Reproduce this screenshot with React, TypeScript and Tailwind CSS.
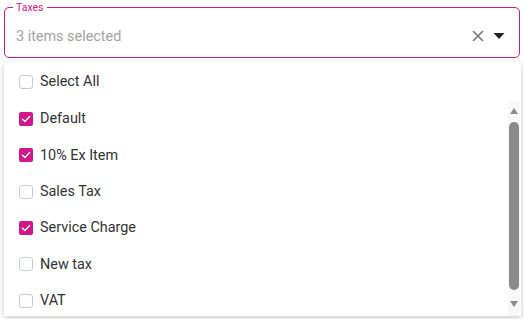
import React from "react";

const options = [
  { label: "Default", checked: true },
  { label: "10% Ex Item", checked: true },
  { label: "Sales Tax", checked: false },
  { label: "Service Charge", checked: true },
  { label: "New tax", checked: false },
  { label: "VAT", checked: false },
];

const Box = ({ checked }: { checked: boolean }) =>
  checked ? (
    <span className="flex h-[14px] w-[14px] items-center justify-center rounded-[2px] bg-[#d3178a]">
      <svg width="10" height="10" viewBox="0 0 10 10" fill="none">
        <path d="M1.5 5.2 L4 7.5 L8.6 2.6" stroke="white" strokeWidth="1.4" strokeLinecap="round" strokeLinejoin="round" />
      </svg>
    </span>
  ) : (
    <span className="h-[14px] w-[14px] rounded-[3px] border border-[#c5cbd3] bg-white" />
  );

const App: React.FC = () => {
  return (
    <div className="h-[319px] w-[524px] bg-white font-['Roboto',sans-serif] text-[14.4px] text-[#333]">
      <div className="px-[4px] pt-[7px]">
        <div className="relative flex h-[51px] items-center rounded-[5px] border border-[#d3178a] pl-[11px] pr-[14px]">
          <span className="absolute -top-[5px] left-[8px] bg-white px-[3px] text-[10.5px] leading-[10px] text-[#d3178a]">
            Taxes
          </span>
          <span className="flex-1 pt-[9px] text-[14.4px] text-[#a3a3a3]">3 items selected</span>
          <svg width="14" height="14" viewBox="0 0 14 14" className="mr-[8px] ml-[2px] mt-[6px]">
            <path d="M2 2 L12 12 M12 2 L2 12" stroke="#777" strokeWidth="1.6" />
          </svg>
          <svg width="12" height="8" viewBox="0 0 12 8" className="mt-[6px]">
            <path d="M0.5 1 L11.5 1 L6 7 Z" fill="#222" />
          </svg>
        </div>
      </div>

      <div className="mx-[4px] mt-[4px] h-[254px] w-[517px] bg-white shadow-[0_2px_6px_rgba(0,0,0,0.22)]">
        <div className="flex h-[39px] items-center gap-[7px] pl-[15px]">
          <Box checked={false} />
          <span>Select All</span>
        </div>
        <div className="flex h-[215px]">
          <div className="flex-1">
            {options.map((o) => (
              <div key={o.label} className="flex h-[36.3px] items-center gap-[7px] pl-[15px]">
                <Box checked={o.checked} />
                <span>{o.label}</span>
              </div>
            ))}
          </div>
          <div className="mr-[1px] flex w-[12px] flex-col items-center bg-[#f8f8f8] pt-[7px]">
            <svg width="8" height="6" viewBox="0 0 8 6">
              <path d="M0 6 L4 0 L8 6 Z" fill="#8a8a8a" />
            </svg>
            <div className="mt-[8px] h-[168px] w-[10px] rounded-[5px] bg-[#8a8a8a]" />
            <svg width="8" height="6" viewBox="0 0 8 6" className="mt-[11px]">
              <path d="M0 0 L8 0 L4 6 Z" fill="#8a8a8a" />
            </svg>
          </div>
        </div>
      </div>
    </div>
  );
};

export default App;
